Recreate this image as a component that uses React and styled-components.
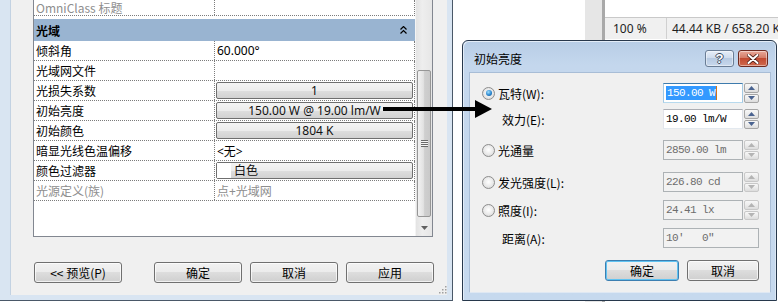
import React from 'react';
import styled, { createGlobalStyle, css } from 'styled-components';

const Global = createGlobalStyle`
  html, body { margin: 0; padding: 0; background: #fff; overflow: hidden; }
  #root { width: 778px; height: 302px; }
`;

const UI_FONT = `"Noto Sans", "Noto Sans CJK SC", sans-serif`;
const CJK_FONT = `"Noto Sans CJK SC", "Noto Sans", sans-serif`;
const MONO_FONT = `"Liberation Mono", "DejaVu Sans Mono", "Noto Sans CJK SC", monospace`;

const Screen = styled.div`
  position: relative;
  width: 778px;
  height: 302px;
  overflow: hidden;
  display: flex;
  align-items: flex-start;
  background: #fff;
  font-family: ${UI_FONT};
  font-size: 12px;
  color: #000;
`;

/* ---------- left properties window ---------- */
const LeftWindow = styled.div`
  flex: none;
  width: 453px;
  height: 301px;
  box-sizing: border-box;
  display: flex;
  background: #d9e5f2;
  border-right: 1px solid #4a5868;
  border-bottom: 1px solid #4a5868;
  padding: 0 5px 5px 10px;
`;

const Client = styled.div`
  position: relative;
  flex: 1;
  display: flex;
  flex-direction: column;
  background: #f0f0f0;
  padding-left: 23px;
  border-left: 1px solid #c3d2e2;
`;

const GridBox = styled.div`
  width: 400px;
  height: 237px;
  box-sizing: border-box;
  display: flex;
  background: #fff;
  border: 1px solid #828790;
  border-top: none;
  margin-left: -1px;
`;

const Rows = styled.div`
  width: 381px;
  display: flex;
  flex-direction: column;
`;

const Row = styled.div`
  display: grid;
  grid-template-columns: 181px 1fr;
  height: ${p => p.$h || 20}px;
  box-sizing: border-box;
  border-bottom: 1px dotted #7c7c7c;
  border-right: 1px dotted #7c7c7c;
  color: ${p => (p.$muted ? '#8e8e8e' : '#000')};
`;

const NameCell = styled.div`
  display: flex;
  align-items: ${p => (p.$bottom ? 'flex-end' : 'center')};
  padding-left: 2px;
  border-right: 1px dotted #7c7c7c;
  font-family: ${CJK_FONT};
  white-space: nowrap;
  overflow: hidden;
  line-height: 15px;
`;

const ValueCell = styled.div`
  display: flex;
  align-items: center;
  padding-left: 2px;
  white-space: nowrap;
  overflow: hidden;
`;

const Category = styled.div`
  margin-top: 3px;
  height: 22px;
  display: flex;
  align-items: center;
  justify-content: space-between;
  padding: 0 8px 0 2px;
  background: #99b4d1;
  font-family: ${CJK_FONT};
  font-weight: 700;
`;

const ValueButton = styled.div`
  flex: 1;
  height: 17px;
  margin: 0 1px 0 -1px;
  box-sizing: border-box;
  display: flex;
  align-items: center;
  justify-content: ${p => (p.$left ? 'flex-start' : 'center')};
  border: 1px solid #6f6f6f;
  border-radius: 2px;
  background: linear-gradient(180deg, #f4f4f4 0%, #ececec 50%, #dedede 51%, #d2d2d2 100%);
  font-size: 12px;
  line-height: 15px;
  font-family: ${UI_FONT};
  color: #111;
`;

const Swatch = styled.span`
  width: 14px;
  height: 15px;
  background: #fff;
  margin-right: 3px;
`;

const Scrollbar = styled.div`
  width: 17px;
  display: flex;
  flex-direction: column;
  background: linear-gradient(90deg, #e3e3e3, #eeeeee 40%, #e6e6e6);
  border-left: 1px solid #f4f4f4;
  box-sizing: border-box;
`;

const Track = styled.div`
  flex: 1;
  padding-top: 70px;
`;

const Thumb = styled.div`
  height: 147px;
  margin: 0 1px;
  box-sizing: border-box;
  border: 1px solid #969696;
  border-radius: 2px;
  background: linear-gradient(90deg, #f2f2f2 0%, #e2e2e2 45%, #cfcfcf 55%, #c9c9c9 100%);
  display: flex;
  align-items: center;
  justify-content: center;
`;

const Grip = styled.div`
  width: 7px;
  height: 7px;
  background: repeating-linear-gradient(180deg, #6a6a6a 0 1px, #f4f4f4 1px 2px);
`;

const ArrowButton = styled.div`
  height: 17px;
  display: flex;
  align-items: center;
  justify-content: center;
`;

const ButtonRow = styled.div`
  display: flex;
  margin-top: 25px;
`;

const PushButton = styled.div`
  width: ${p => p.$w || 88}px;
  height: 21px;
  box-sizing: border-box;
  margin-right: ${p => p.$mr ?? 8}px;
  display: flex;
  align-items: center;
  justify-content: center;
  border: 1px solid #707070;
  border-radius: 3px;
  background: linear-gradient(180deg, #f2f2f2 0%, #ebebeb 49%, #dddddd 50%, #cfcfcf 100%);
  box-shadow: inset 0 0 0 1px rgba(255, 255, 255, 0.7);
  font-family: ${CJK_FONT};
  font-size: 12px;
  color: #000;
  ${p =>
    p.$default &&
    css`
      border-color: #3c7fb1;
      box-shadow: inset 0 0 0 1px #60c3f2;
    `}
`;

const ResizeGrip = styled.svg`
  position: absolute;
  right: 0;
  bottom: 1px;
`;

/* ---------- background app on the right ---------- */
const BackArea = styled.div`
  flex: 1;
  height: 302px;
  display: flex;
`;

const WhitePane = styled.div`
  width: 132px;
  background: #fff;
`;

const VStrip = styled.div`
  width: 17px;
  height: 100%;
  background: #e6e6e6;
  border-right: 3px solid #a9a9a9;
`;

const RightPane = styled.div`
  flex: 1;
  display: flex;
  flex-direction: column;
`;

const PaneTop = styled.div`
  height: 17px;
  border-bottom: 1px solid #c9c9c9;
`;

const StatusBar = styled.div`
  height: 21px;
  display: flex;
  align-items: center;
  background: #f0f0f0;
  color: #1e1e1e;
  white-space: nowrap;
`;

const StatusCell = styled.div`
  height: 100%;
  display: flex;
  align-items: center;
  padding-left: ${p => p.$pl}px;
  width: ${p => (p.$w ? `${p.$w}px` : 'auto')};
  border-right: ${p => (p.$sep ? '1px solid #d0d0d0' : 'none')};
`;

/* ---------- dialog ---------- */
const Dialog = styled.div`
  position: absolute;
  left: 462px;
  top: 40px;
  width: 315px;
  height: 261px;
  box-sizing: border-box;
  display: flex;
  flex-direction: column;
  padding: 0 6px 7px 7px;
  border: 1px solid #27384c;
  border-radius: 6px 6px 0 0;
  background: linear-gradient(180deg, #b7cde6 0px, #c4d7ed 24px, #c6d9ee 100%);
  box-shadow: inset 1px 1px 0 #e3edf8, inset -1px 0 0 #dbe7f4;
`;

const TitleBar = styled.div`
  height: 31px;
  display: flex;
  align-items: flex-start;
  justify-content: space-between;
`;

const TitleText = styled.div`
  padding: 10px 0 0 4px;
  font-family: ${CJK_FONT};
  font-size: 12px;
  line-height: 15px;
  color: #000;
`;

const Caption = styled.div`
  display: flex;
  gap: 4px;
  margin: 9px 2px 0 0;
`;

const CaptionButton = styled.div`
  width: ${p => p.$w}px;
  height: 17px;
  box-sizing: border-box;
  display: flex;
  align-items: center;
  justify-content: center;
  border-radius: 3px;
  border: 1px solid ${p => (p.$close ? '#6e2a20' : '#6a7d95')};
  background: ${p =>
    p.$close
      ? 'linear-gradient(180deg, #e9a899 0%, #d47c68 45%, #c24a31 50%, #cf6a4e 100%)'
      : 'linear-gradient(180deg, #e6eef8 0%, #cfdced 45%, #b7cae2 50%, #c8d8ec 100%)'};
  box-shadow: inset 0 0 0 1px rgba(255, 255, 255, 0.45);
`;

const HelpGlyph = styled.span`
  font-family: "Liberation Sans", sans-serif;
  font-weight: 700;
  font-size: 13px;
  line-height: 13px;
  color: #fff;
  text-shadow: 1px 0 0 #3c4d63, -1px 0 0 #3c4d63, 0 1px 0 #3c4d63, 0 -1px 0 #3c4d63;
`;

const DialogClient = styled.div`
  flex: 1;
  display: flex;
  flex-direction: column;
  background: #f0f0f0;
  padding: 0 11px 0 12px;
  border: 1px solid #a8bdd6;
  border-bottom-color: #dfe8f3;
  margin: 0 -1px;
`;

const FieldRow = styled.div`
  height: 20px;
  margin-top: ${p => p.$top}px;
  display: flex;
  align-items: center;
  justify-content: space-between;
`;

const FieldLabel = styled.label`
  display: flex;
  align-items: center;
  gap: 3px;
  padding-left: ${p => (p.$indent ? 20 : 0)}px;
  font-family: ${CJK_FONT};
  font-size: 12px;
  color: #000;
  white-space: nowrap;
`;

const Radio = styled.span`
  width: 13px;
  height: 13px;
  box-sizing: border-box;
  flex: none;
  display: flex;
  align-items: center;
  justify-content: center;
  border-radius: 50%;
  border: 1px solid #8d8d8d;
  background: radial-gradient(circle at 50% 45%, #ffffff 0%, #e9e9e9 55%, #cdcdcd 100%);
`;

const RadioDot = styled.span`
  width: 6px;
  height: 6px;
  border-radius: 50%;
  background: radial-gradient(circle at 40% 35%, #9fe0ff 0%, #2a86cf 55%, #0b4b86 100%);
`;

const InputGroup = styled.div`
  display: flex;
  gap: 1px;
  height: 100%;
`;

const TextBox = styled.div`
  width: ${p => p.$w || 80}px;
  height: 100%;
  box-sizing: border-box;
  display: flex;
  align-items: center;
  padding-left: 2px;
  border: 1px solid #abadb3;
  border-left-color: #e2e3ea;
  border-right-color: #dbdfe6;
  border-bottom-color: #e3e9ef;
  background: #fff;
  font-family: ${MONO_FONT};
  font-size: 11px;
  letter-spacing: -0.6px;
  color: #000;
  white-space: pre;
  ${p =>
    p.$focus &&
    css`
      border-color: #3d7bad #a4c9e3 #b7d9ed #a4c9e3;
    `}
  ${p =>
    p.$disabled &&
    css`
      background: #f2f2f2;
      border-color: #adb2b5;
      color: #6d6d6d;
    `}
`;

const Selected = styled.span`
  background: #3399ff;
  color: #fff;
  padding: 1px 1px 1px 1px;
  border-right: 1px solid #d0741c;
`;

const Spinner = styled.div`
  width: 15px;
  display: flex;
  flex-direction: column;
  gap: 1px;
`;

const SpinButton = styled.div`
  flex: 1;
  display: flex;
  align-items: center;
  justify-content: center;
  box-sizing: border-box;
  border: 1px solid ${p => (p.$disabled ? '#c8c8c8' : '#a6a6a6')};
  border-radius: 2px;
  background: linear-gradient(180deg, #f7f7f7 0%, #ececec 50%, #dcdcdc 100%);
`;

const DialogButtons = styled.div`
  display: flex;
  justify-content: flex-end;
  margin-top: 12px;
  & > *:last-child {
    margin-right: 0;
  }
`;

const ArrowSvg = styled.svg`
  position: absolute;
  left: 380px;
  top: 98px;
`;

const DoubleChevron = () => (
  <svg width="7" height="8" viewBox="0 0 7 8">
    <polyline points="0.5,3.5 3.5,0.5 6.5,3.5" fill="none" stroke="#000" strokeWidth="1.2" />
    <polyline points="0.5,7.5 3.5,4.5 6.5,7.5" fill="none" stroke="#000" strokeWidth="1.2" />
  </svg>
);

const Tri = ({ up, color }) => (
  <svg width="7" height="4" viewBox="0 0 7 4">
    <polygon points={up ? '0,4 7,4 3.5,0' : '0,0 7,0 3.5,4'} fill={color} />
  </svg>
);

const rows = [
  { name: '倾斜角', kind: 'text', value: '60.000°' },
  { name: '光域网文件', kind: 'text', value: '' },
  { name: '光损失系数', kind: 'button', value: '1' },
  { name: '初始亮度', kind: 'button', value: '150.00 W @ 19.00 lm/W' },
  { name: '初始颜色', kind: 'button', value: '1804 K' },
  { name: '暗显光线色温偏移', kind: 'text', value: '<无>' },
  { name: '颜色过滤器', kind: 'swatch', value: '白色' },
  { name: '光源定义(族)', kind: 'text', value: '点+光域网', muted: true },
];

const fields = [
  { top: 10, radio: true, checked: true, label: '瓦特(W):', value: '150.00 W', focus: true, spin: true },
  { top: 6, indent: true, label: '效力(E):', value: '19.00 lm/W', spin: true },
  { top: 11, radio: true, label: '光通量', value: '2850.00 lm', disabled: true, spin: true },
  { top: 12, radio: true, label: '发光强度(L):', value: '226.80 cd', disabled: true, spin: true },
  { top: 8, radio: true, label: '照度(I):', value: '24.41 lx', disabled: true, spin: true },
  { top: 8, indent: true, label: '距离(A):', value: '10′   0″', disabled: true, spin: false },
];

function Field({ f }) {
  return (
    <FieldRow $top={f.top}>
      <FieldLabel $indent={f.indent}>
        {f.radio && <Radio>{f.checked && <RadioDot />}</Radio>}
        {f.label}
      </FieldLabel>
      <InputGroup>
        <TextBox $w={f.spin ? 80 : 96} $focus={f.focus} $disabled={f.disabled}>
          {f.focus ? <Selected>{f.value}</Selected> : f.value}
        </TextBox>
        {f.spin && (
          <Spinner>
            <SpinButton $disabled={f.disabled}>
              <Tri up color={f.disabled ? '#b4b4b4' : '#4a6390'} />
            </SpinButton>
            <SpinButton $disabled={f.disabled}>
              <Tri color={f.disabled ? '#b4b4b4' : '#4a6390'} />
            </SpinButton>
          </Spinner>
        )}
      </InputGroup>
    </FieldRow>
  );
}

export default function App() {
  return (
    <>
      <Global />
      <Screen>
        <LeftWindow>
          <Client>
            <GridBox>
              <Rows>
                <Row $h={16} $muted>
                  <NameCell $bottom>OmniClass 标题</NameCell>
                  <ValueCell />
                </Row>
                <Category>
                  <span>光域</span>
                  <DoubleChevron />
                </Category>
                {rows.map(r => (
                  <Row key={r.name} $muted={r.muted}>
                    <NameCell>{r.name}</NameCell>
                    <ValueCell>
                      {r.kind === 'text' && r.value}
                      {r.kind === 'button' && <ValueButton>{r.value}</ValueButton>}
                      {r.kind === 'swatch' && (
                        <ValueButton $left>
                          <Swatch />
                          {r.value}
                        </ValueButton>
                      )}
                    </ValueCell>
                  </Row>
                ))}
              </Rows>
              <Scrollbar>
                <Track>
                  <Thumb>
                    <Grip />
                  </Thumb>
                </Track>
                <ArrowButton>
                  <Tri color="#606060" />
                </ArrowButton>
              </Scrollbar>
            </GridBox>
            <ButtonRow>
              <PushButton $mr={32}>&lt;&lt; 预览(P)</PushButton>
              <PushButton>确定</PushButton>
              <PushButton>取消</PushButton>
              <PushButton>应用</PushButton>
            </ButtonRow>
            <ResizeGrip width="10" height="10" viewBox="0 0 10 10">
              {[[8, 2], [5, 5], [8, 5], [2, 8], [5, 8], [8, 8]].map(([x, y]) => (
                <rect key={`${x}-${y}`} x={x} y={y} width="1.5" height="1.5" fill="#a0a0a0" />
              ))}
            </ResizeGrip>
          </Client>
        </LeftWindow>

        <BackArea>
          <WhitePane />
          <VStrip />
          <RightPane>
            <PaneTop />
            <StatusBar>
              <StatusCell $pl={8} $w={53} $sep>
                100 %
              </StatusCell>
              <StatusCell $pl={5}>44.44 KB / 658.20 KB</StatusCell>
            </StatusBar>
          </RightPane>
        </BackArea>

        <Dialog>
          <TitleBar>
            <TitleText>初始亮度</TitleText>
            <Caption>
              <CaptionButton $w={29}>
                <HelpGlyph>?</HelpGlyph>
              </CaptionButton>
              <CaptionButton $w={30} $close>
                <svg width="12" height="10" viewBox="0 0 12 10">
                  <path d="M1.5 1 L10.5 9 M10.5 1 L1.5 9" stroke="#4a1a12" strokeWidth="3.6" strokeLinecap="round" />
                  <path d="M1.5 1 L10.5 9 M10.5 1 L1.5 9" stroke="#fff" strokeWidth="2" strokeLinecap="round" />
                </svg>
              </CaptionButton>
            </Caption>
          </TitleBar>
          <DialogClient>
            {fields.map(f => (
              <Field key={f.label} f={f} />
            ))}
            <DialogButtons>
              <PushButton $w={74} $default>确定</PushButton>
              <PushButton $w={72}>取消</PushButton>
            </DialogButtons>
          </DialogClient>
        </Dialog>

        <ArrowSvg width="115" height="22" viewBox="0 0 115 22">
          <rect x="3" y="9" width="94" height="4" fill="#000" />
          <polygon points="95,2 112,11 95,20" fill="#000" />
        </ArrowSvg>
      </Screen>
    </>
  );
}
